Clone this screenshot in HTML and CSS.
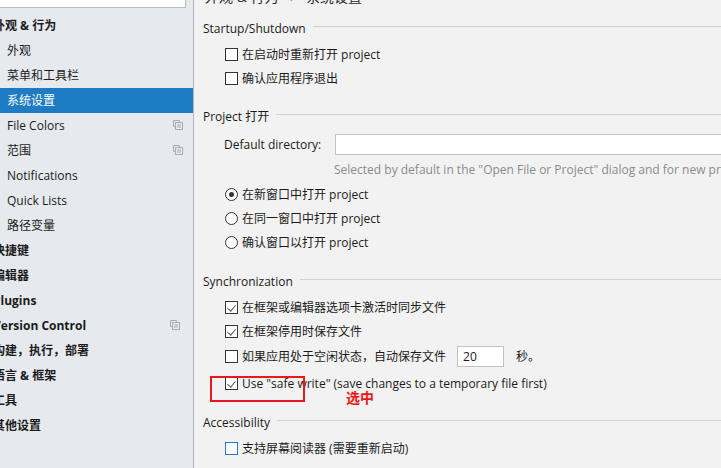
FILE: index.html
```html
<!DOCTYPE html>
<html>
<head>
<meta charset="utf-8">
<link rel="stylesheet" href="styles.css">
</head>
<body>
<div class="app">
  <aside class="sidebar">
    <div class="search"></div>
    <ul class="tree">
      <li class="top">外观 &amp; 行为</li>
      <li class="child">外观</li>
      <li class="child">菜单和工具栏</li>
      <li class="child selected">系统设置</li>
      <li class="child">File Colors<span class="copy"><svg width="10" height="10" viewBox="0 0 10 10"><path d="M0.5 0.5h6v1.5M0.5 0.5v6h1.5" fill="none" stroke="#a9adb2"/><rect x="2.5" y="2.5" width="7" height="7" fill="none" stroke="#a9adb2"/><path d="M4 5h4M4 7h4" stroke="#a9adb2"/></svg></span></li>
      <li class="child">范围<span class="copy"><svg width="10" height="10" viewBox="0 0 10 10"><path d="M0.5 0.5h6v1.5M0.5 0.5v6h1.5" fill="none" stroke="#a9adb2"/><rect x="2.5" y="2.5" width="7" height="7" fill="none" stroke="#a9adb2"/><path d="M4 5h4M4 7h4" stroke="#a9adb2"/></svg></span></li>
      <li class="child">Notifications</li>
      <li class="child">Quick Lists</li>
      <li class="child">路径变量</li>
      <li class="top">快捷键</li>
      <li class="top">编辑器</li>
      <li class="top">Plugins</li>
      <li class="top">Version Control<span class="copy"><svg width="10" height="10" viewBox="0 0 10 10"><path d="M0.5 0.5h6v1.5M0.5 0.5v6h1.5" fill="none" stroke="#a9adb2"/><rect x="2.5" y="2.5" width="7" height="7" fill="none" stroke="#a9adb2"/><path d="M4 5h4M4 7h4" stroke="#a9adb2"/></svg></span></li>
      <li class="top">构建，执行，部署</li>
      <li class="top">语言 &amp; 框架</li>
      <li class="top">工具</li>
      <li class="top">其他设置</li>
    </ul>
  </aside>
  <main class="content">
    <div class="crumb"><span>外观 &amp; 行为 <span class="sep">›</span> 系统设置</span></div>

    <div class="section s-startup">
      <div class="header"><span>Startup/Shutdown</span><i></i></div>
      <div class="row r-first"><span class="cb"></span>在启动时重新打开 project</div>
      <div class="row"><span class="cb"></span>确认应用程序退出</div>
    </div>

    <div class="section s-project">
      <div class="header"><span>Project 打开</span><i></i></div>
      <div class="dirrow"><span class="label">Default directory:</span><span class="input wide"></span></div>
      <div class="hint">Selected by default in the "Open File or Project" dialog and for new projects</div>
      <div class="row r-radio"><span class="radio on"></span>在新窗口中打开 project</div>
      <div class="row"><span class="radio"></span>在同一窗口中打开 project</div>
      <div class="row"><span class="radio"></span>确认窗口以打开 project</div>
    </div>

    <div class="section s-sync">
      <div class="header"><span>Synchronization</span><i></i></div>
      <div class="row r-first"><span class="cb checked"></span>在框架或编辑器选项卡激活时同步文件</div>
      <div class="row"><span class="cb checked"></span>在框架停用时保存文件</div>
      <div class="row r-idle"><span class="cb"></span>如果应用处于空闲状态，自动保存文件<span class="input small">20</span><span class="sec">秒。</span></div>
      <div class="row r-safe"><span class="cb checked"></span>Use "safe write" (save changes to a temporary file first)</div>
    </div>

    <div class="section s-access">
      <div class="header"><span>Accessibility</span><i></i></div>
      <div class="row r-acc"><span class="cb focus"></span>支持屏幕阅读器 (需要重新启动)</div>
    </div>

    <div class="mark"></div>
    <div class="note">选中</div>
  </main>
</div>
</body>
</html>
```

FILE: styles.css
```css
* { box-sizing: border-box; }
html, body { margin: 0; padding: 0; }
body {
  width: 721px;
  height: 468px;
  overflow: hidden;
  font-family: "Open Sans", "Noto Sans CJK SC", sans-serif;
  font-size: 12px;
  color: #1b1b1b;
}
.app { display: flex; height: 468px; }

.sidebar {
  width: 194px;
  flex: none;
  background: #e6eaef;
  border-right: 1px solid #b4b7bb;
  overflow: hidden;
}
.search {
  width: 186px;
  height: 8px;
  background: #fff;
  border-right: 1px solid #b9bcc0;
  border-bottom: 1px solid #b9bcc0;
}
.tree { list-style: none; margin: 5px 0 0 0; padding: 0; }
.tree li {
  height: 25px;
  line-height: 25px;
  position: relative;
  white-space: nowrap;
}
.tree .top { padding-left: 0; margin-left: -7px; font-weight: 700; }
.tree .child { padding-left: 7px; }
.tree .selected { background: #1d7cc3; color: #fff; }
.copy {
  position: absolute;
  right: 10px;
  top: 7px;
  width: 10px;
  height: 10px;
  display: block;
}
.copy svg { display: block; }
.tree .top .copy { right: 13px; }

.content {
  flex: 1;
  position: relative;
  background: #f2f2f2;
  padding-left: 9px;
  overflow: hidden;
}
.crumb {
  height: 6px;
  overflow: hidden;
  position: relative;
}
.crumb > span {
  position: absolute;
  left: 2px;
  top: -12px;
  font-size: 14px;
  line-height: 18px;
  white-space: nowrap;
  color: #2a2a2a;
}
.crumb .sep { color: #888; margin: 0 8px; }

.header {
  display: flex;
  align-items: center;
  height: 20px;
  white-space: nowrap;
}
.header i {
  flex: 1;
  height: 1px;
  background: #d2d2d2;
  margin-left: 7px;
  margin-bottom: 4px;
}
.s-startup { margin-top: 12px; }
.s-project { margin-top: 16px; }
.s-sync { margin-top: 17px; }
.s-access { margin-top: 17px; }

.row {
  display: flex;
  align-items: center;
  height: 24px;
  padding-left: 22px;
  white-space: nowrap;
}
.r-first { margin-top: 4px; }
.r-radio { margin-top: 2px; }
.r-idle { margin-top: 1px; }
.r-safe { margin-top: 3px; }
.r-acc { margin-top: 4px; }

.cb {
  width: 13px;
  height: 13px;
  border: 1px solid #333;
  background: #fff;
  margin-right: 4px;
  flex: none;
  position: relative;
}
.cb.checked::after {
  content: "";
  position: absolute;
  left: 3px;
  top: 1px;
  width: 4px;
  height: 7px;
  border-right: 1.3px solid #5a5a5a;
  border-bottom: 1.3px solid #5a5a5a;
  transform: rotate(40deg);
}
.cb.focus { border-color: #2f78c9; }
.radio {
  width: 13px;
  height: 13px;
  border: 1px solid #333;
  border-radius: 50%;
  background: #fff;
  margin-right: 4px;
  flex: none;
  position: relative;
}
.radio.on::after {
  content: "";
  position: absolute;
  left: 3px;
  top: 3px;
  width: 5px;
  height: 5px;
  border-radius: 50%;
  background: #333;
}

.dirrow {
  display: flex;
  align-items: center;
  height: 21px;
  margin-top: 8px;
  padding-left: 21px;
  white-space: nowrap;
}
.label { width: 111px; flex: none; }
.input {
  background: #fff;
  border: 1px solid #c2c2c2;
  height: 21px;
  flex: none;
}
.input.wide { width: 420px; }
.input.small {
  width: 47px;
  margin-left: 11px;
  padding-left: 5px;
  line-height: 19px;
}
.sec { margin-left: 12px; }
.hint {
  height: 20px;
  line-height: 20px;
  margin-top: 5px;
  padding-left: 131px;
  color: #8b8b8b;
  white-space: nowrap;
}

.mark {
  position: absolute;
  left: 16px;
  top: 376px;
  width: 95px;
  height: 26px;
  border: 2px solid #e8181c;
}
.note {
  position: absolute;
  left: 152px;
  top: 389px;
  color: #f01414;
  font-size: 14px;
  font-weight: 700;
  line-height: 18px;
}
```
